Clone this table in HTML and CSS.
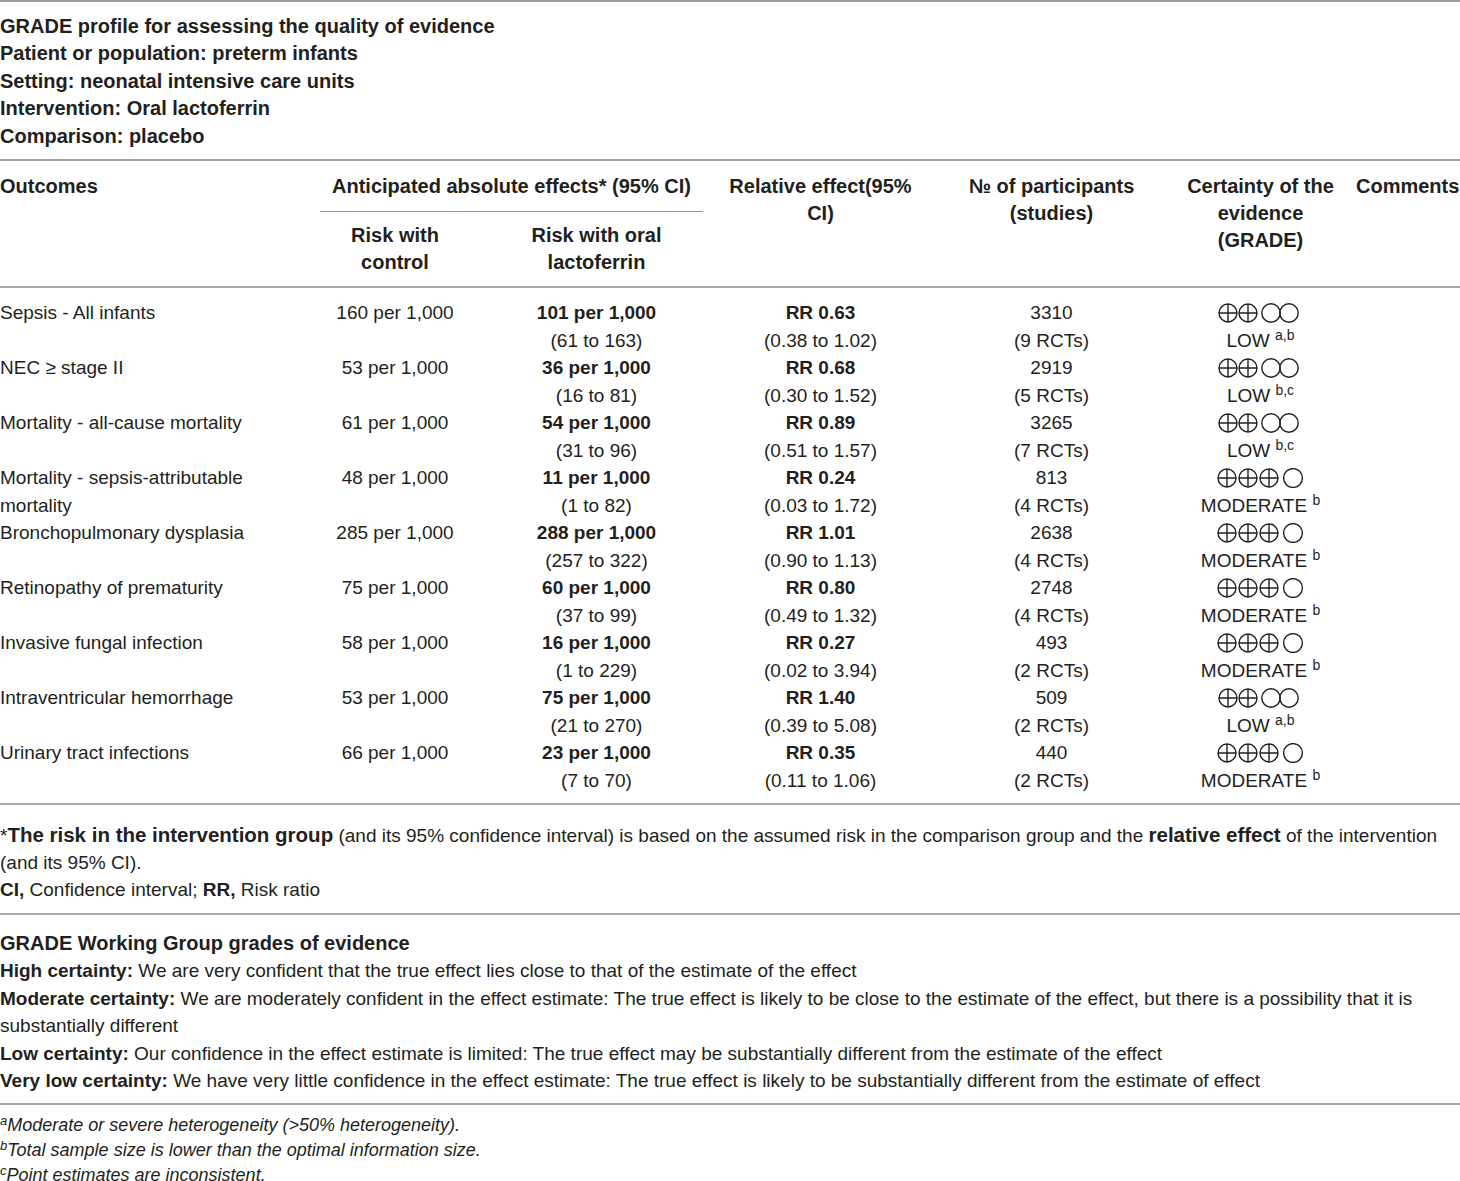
FILE: index.html
```html
<!DOCTYPE html>
<html lang="en">
<head>
<meta charset="utf-8">
<title>GRADE profile</title>
<link rel="stylesheet" href="styles.css">
</head>
<body>
<div class="page">
  <section class="intro">
    <div>GRADE profile for assessing the quality of evidence</div>
    <div>Patient or population: preterm infants</div>
    <div>Setting: neonatal intensive care units</div>
    <div>Intervention: Oral lactoferrin</div>
    <div>Comparison: placebo</div>
  </section>

  <div class="grid head">
    <div class="th h-out">Outcomes</div>
    <div class="th h-ant"><span class="ant">Anticipated absolute effects* (95% CI)</span></div>
    <div class="th h-rel">Relative effect(95% CI)</div>
    <div class="th h-part">№ of participants (studies)</div>
    <div class="th h-cert">Certainty of the evidence (GRADE)</div>
    <div class="th h-com">Comments</div>
    <div class="th h-ctrl">Risk with<br>control</div>
    <div class="th h-lac">Risk with oral<br>lactoferrin</div>
  </div>

  <div class="grid body">
    <div class="td out">Sepsis - All infants</div>
    <div class="td">160 per 1,000</div>
    <div class="td"><b>101 per 1,000</b><br>(61 to 163)</div>
    <div class="td"><b>RR 0.63</b><br>(0.38 to 1.02)</div>
    <div class="td">3310<br>(9 RCTs)</div>
    <div class="td"><svg class="g" width="86" height="20" viewBox="0 0 86 20"><g fill="none" stroke="#231f20" stroke-width="1.4"><circle cx="10" cy="10" r="9"/><path d="M1 10H19M10 1V19"/><circle cx="30" cy="10" r="9"/><path d="M21 10H39M30 1V19"/><circle cx="53" cy="10" r="9.2"/><circle cx="71" cy="10" r="9.2"/></g></svg><br>LOW <sup>a,b</sup></div>
    <div class="td"></div>

    <div class="td out">NEC ≥ stage II</div>
    <div class="td">53 per 1,000</div>
    <div class="td"><b>36 per 1,000</b><br>(16 to 81)</div>
    <div class="td"><b>RR 0.68</b><br>(0.30 to 1.52)</div>
    <div class="td">2919<br>(5 RCTs)</div>
    <div class="td"><svg class="g" width="86" height="20" viewBox="0 0 86 20"><g fill="none" stroke="#231f20" stroke-width="1.4"><circle cx="10" cy="10" r="9"/><path d="M1 10H19M10 1V19"/><circle cx="30" cy="10" r="9"/><path d="M21 10H39M30 1V19"/><circle cx="53" cy="10" r="9.2"/><circle cx="71" cy="10" r="9.2"/></g></svg><br>LOW <sup>b,c</sup></div>
    <div class="td"></div>

    <div class="td out">Mortality - all-cause mortality</div>
    <div class="td">61 per 1,000</div>
    <div class="td"><b>54 per 1,000</b><br>(31 to 96)</div>
    <div class="td"><b>RR 0.89</b><br>(0.51 to 1.57)</div>
    <div class="td">3265<br>(7 RCTs)</div>
    <div class="td"><svg class="g" width="86" height="20" viewBox="0 0 86 20"><g fill="none" stroke="#231f20" stroke-width="1.4"><circle cx="10" cy="10" r="9"/><path d="M1 10H19M10 1V19"/><circle cx="30" cy="10" r="9"/><path d="M21 10H39M30 1V19"/><circle cx="53" cy="10" r="9.2"/><circle cx="71" cy="10" r="9.2"/></g></svg><br>LOW <sup>b,c</sup></div>
    <div class="td"></div>

    <div class="td out">Mortality - sepsis-attributable mortality</div>
    <div class="td">48 per 1,000</div>
    <div class="td"><b>11 per 1,000</b><br>(1 to 82)</div>
    <div class="td"><b>RR 0.24</b><br>(0.03 to 1.72)</div>
    <div class="td">813<br>(4 RCTs)</div>
    <div class="td"><svg class="g" width="88" height="20" viewBox="0 0 88 20"><g fill="none" stroke="#231f20" stroke-width="1.4"><circle cx="10" cy="10" r="9"/><path d="M1 10H19M10 1V19"/><circle cx="31" cy="10" r="9"/><path d="M22 10H40M31 1V19"/><circle cx="52" cy="10" r="9"/><path d="M43 10H61M52 1V19"/><circle cx="76" cy="10" r="9.4"/></g></svg><br>MODERATE <sup>b</sup></div>
    <div class="td"></div>

    <div class="td out">Bronchopulmonary dysplasia</div>
    <div class="td">285 per 1,000</div>
    <div class="td"><b>288 per 1,000</b><br>(257 to 322)</div>
    <div class="td"><b>RR 1.01</b><br>(0.90 to 1.13)</div>
    <div class="td">2638<br>(4 RCTs)</div>
    <div class="td"><svg class="g" width="88" height="20" viewBox="0 0 88 20"><g fill="none" stroke="#231f20" stroke-width="1.4"><circle cx="10" cy="10" r="9"/><path d="M1 10H19M10 1V19"/><circle cx="31" cy="10" r="9"/><path d="M22 10H40M31 1V19"/><circle cx="52" cy="10" r="9"/><path d="M43 10H61M52 1V19"/><circle cx="76" cy="10" r="9.4"/></g></svg><br>MODERATE <sup>b</sup></div>
    <div class="td"></div>

    <div class="td out">Retinopathy of prematurity</div>
    <div class="td">75 per 1,000</div>
    <div class="td"><b>60 per 1,000</b><br>(37 to 99)</div>
    <div class="td"><b>RR 0.80</b><br>(0.49 to 1.32)</div>
    <div class="td">2748<br>(4 RCTs)</div>
    <div class="td"><svg class="g" width="88" height="20" viewBox="0 0 88 20"><g fill="none" stroke="#231f20" stroke-width="1.4"><circle cx="10" cy="10" r="9"/><path d="M1 10H19M10 1V19"/><circle cx="31" cy="10" r="9"/><path d="M22 10H40M31 1V19"/><circle cx="52" cy="10" r="9"/><path d="M43 10H61M52 1V19"/><circle cx="76" cy="10" r="9.4"/></g></svg><br>MODERATE <sup>b</sup></div>
    <div class="td"></div>

    <div class="td out">Invasive fungal infection</div>
    <div class="td">58 per 1,000</div>
    <div class="td"><b>16 per 1,000</b><br>(1 to 229)</div>
    <div class="td"><b>RR 0.27</b><br>(0.02 to 3.94)</div>
    <div class="td">493<br>(2 RCTs)</div>
    <div class="td"><svg class="g" width="88" height="20" viewBox="0 0 88 20"><g fill="none" stroke="#231f20" stroke-width="1.4"><circle cx="10" cy="10" r="9"/><path d="M1 10H19M10 1V19"/><circle cx="31" cy="10" r="9"/><path d="M22 10H40M31 1V19"/><circle cx="52" cy="10" r="9"/><path d="M43 10H61M52 1V19"/><circle cx="76" cy="10" r="9.4"/></g></svg><br>MODERATE <sup>b</sup></div>
    <div class="td"></div>

    <div class="td out">Intraventricular hemorrhage</div>
    <div class="td">53 per 1,000</div>
    <div class="td"><b>75 per 1,000</b><br>(21 to 270)</div>
    <div class="td"><b>RR 1.40</b><br>(0.39 to 5.08)</div>
    <div class="td">509<br>(2 RCTs)</div>
    <div class="td"><svg class="g" width="86" height="20" viewBox="0 0 86 20"><g fill="none" stroke="#231f20" stroke-width="1.4"><circle cx="10" cy="10" r="9"/><path d="M1 10H19M10 1V19"/><circle cx="30" cy="10" r="9"/><path d="M21 10H39M30 1V19"/><circle cx="53" cy="10" r="9.2"/><circle cx="71" cy="10" r="9.2"/></g></svg><br>LOW <sup>a,b</sup></div>
    <div class="td"></div>

    <div class="td out">Urinary tract infections</div>
    <div class="td">66 per 1,000</div>
    <div class="td"><b>23 per 1,000</b><br>(7 to 70)</div>
    <div class="td"><b>RR 0.35</b><br>(0.11 to 1.06)</div>
    <div class="td">440<br>(2 RCTs)</div>
    <div class="td"><svg class="g" width="88" height="20" viewBox="0 0 88 20"><g fill="none" stroke="#231f20" stroke-width="1.4"><circle cx="10" cy="10" r="9"/><path d="M1 10H19M10 1V19"/><circle cx="31" cy="10" r="9"/><path d="M22 10H40M31 1V19"/><circle cx="52" cy="10" r="9"/><path d="M43 10H61M52 1V19"/><circle cx="76" cy="10" r="9.4"/></g></svg><br>MODERATE <sup>b</sup></div>
    <div class="td"></div>
  </div>

  <section class="notes">
    <p class="risk">*<b>The risk in the intervention group</b> (and its 95% confidence interval) is based on the assumed risk in the comparison group and the <b>relative effect</b> of the intervention (and its 95% CI).</p>
    <p><b>CI,</b> Confidence interval; <b>RR,</b> Risk ratio</p>
  </section>

  <section class="grades">
    <p class="gh">GRADE Working Group grades of evidence</p>
    <p><b>High certainty:</b> We are very confident that the true effect lies close to that of the estimate of the effect</p>
    <p><b>Moderate certainty:</b> We are moderately confident in the effect estimate: The true effect is likely to be close to the estimate of the effect, but there is a possibility that it is substantially different</p>
    <p><b>Low certainty:</b> Our confidence in the effect estimate is limited: The true effect may be substantially different from the estimate of the effect</p>
    <p><b>Very low certainty:</b> We have very little confidence in the effect estimate: The true effect is likely to be substantially different from the estimate of effect</p>
  </section>

  <section class="foot">
    <p><sup>a</sup>Moderate or severe heterogeneity (&gt;50% heterogeneity).</p>
    <p><sup>b</sup>Total sample size is lower than the optimal information size.</p>
    <p><sup>c</sup>Point estimates are inconsistent.</p>
  </section>
</div>
</body>
</html>
```

FILE: styles.css
```css
html, body {
  margin: 0;
  padding: 0;
  background: #ffffff;
}

body {
  color: #231f20;
  font-family: "Liberation Sans", Arial, sans-serif;
  font-size: 19px;
}

.page {
  width: 1460px;
  border-top: 2px solid #9e9e9e;
}

p {
  margin: 0;
}

.intro {
  padding: 11px 0 9px;
  font-size: 20px;
  font-weight: bold;
  line-height: 27.4px;
  border-bottom: 2px solid #9e9e9e;
}

.grid {
  display: grid;
  grid-template-columns: 310px 170px 233px 215px 247px 171px 114px;
}

.head {
  border-bottom: 2px solid #a8a8a8;
}

.th {
  font-size: 20px;
  font-weight: bold;
  line-height: 27px;
  text-align: center;
  padding: 12px 10px 0;
}

.h-out {
  grid-column: 1;
  grid-row: 1 / span 2;
  text-align: left;
  padding-left: 0;
}

.h-ant {
  grid-column: 2 / span 2;
  grid-row: 1;
  padding: 12px 10px 0;
}

.ant {
  display: block;
  padding-bottom: 11px;
  border-bottom: 1px solid #9a9a9a;
}

.h-rel { grid-column: 4; grid-row: 1 / span 2; padding-left: 12px; padding-right: 12px; }
.h-part { grid-column: 5; grid-row: 1 / span 2; padding-left: 36px; padding-right: 36px; }
.h-cert { grid-column: 6; grid-row: 1 / span 2; padding-left: 8px; padding-right: 8px; }
.h-com { grid-column: 7; grid-row: 1 / span 2; text-align: left; padding-right: 0; }

.h-ctrl { grid-column: 2; grid-row: 2; padding: 10px 10px 10px; }
.h-lac { grid-column: 3; grid-row: 2; padding: 10px 10px 10px; }

.body {
  padding: 11px 0 9px;
  border-bottom: 2px solid #a8a8a8;
}

.td {
  line-height: 27.5px;
  text-align: center;
  padding: 0 10px;
}

.td.out {
  text-align: left;
  padding-left: 0;
  padding-right: 40px;
}

.td b {
  font-weight: bold;
}

.g {
  display: inline-block;
  vertical-align: -4px;
}

sup {
  font-size: 14px;
  line-height: 0;
  vertical-align: 7px;
}

.notes {
  padding: 16px 0 10px;
  line-height: 27px;
  border-bottom: 2px solid #a8a8a8;
}

.risk b {
  font-size: 20.5px;
}

.grades {
  padding: 15px 0 9px;
  line-height: 27.4px;
  border-bottom: 2px solid #a8a8a8;
}

.gh {
  font-size: 20px;
  font-weight: bold;
}

.foot {
  padding: 8px 0 0;
  font-size: 18px;
  font-style: italic;
  line-height: 25px;
}

.foot sup {
  font-size: 13px;
  vertical-align: 6px;
}
```
